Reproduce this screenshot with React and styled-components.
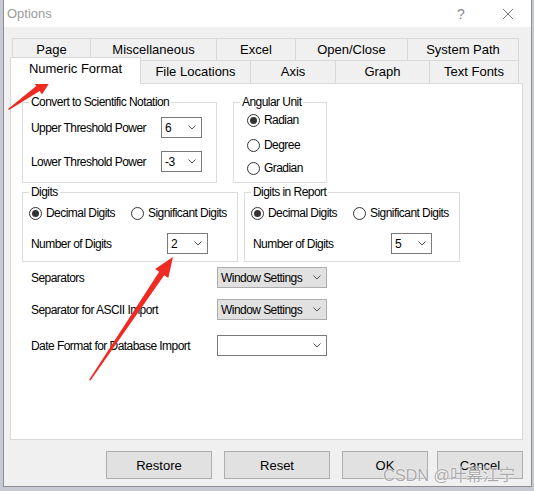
import React from 'react';
import styled, { createGlobalStyle } from 'styled-components';

const Global = createGlobalStyle`
  html, body {
    margin: 0;
    padding: 0;
    background: #c8cad3;
  }
  body {
    font-family: "Liberation Sans", Arial, sans-serif;
    color: #000;
  }
`;

const Screen = styled.div`
  position: relative;
  width: 534px;
  height: 491px;
  overflow: hidden;
`;

const Dialog = styled.div`
  margin-left: 3px;
  width: 529px;
  height: 487px;
  box-sizing: border-box;
  border: 1px solid #8e8e8e;
  border-top: none;
  background: #f0f0f0;
  display: flex;
  flex-direction: column;
`;

const TitleBar = styled.div`
  height: 27px;
  background: #fff;
  display: flex;
  align-items: center;
  padding-left: 3px;
  font-size: 13px;
  color: #9a9a9a;
`;

const TitleText = styled.div`
  flex: 1;
`;

const TitleButton = styled.div`
  width: ${p => p.w}px;
  display: flex;
  justify-content: center;
  align-items: center;
  font-size: 14px;
  color: #8a8a8a;
`;

const Body = styled.div`
  flex: 1;
  padding: 11px 8px 0 6px;
  display: flex;
  flex-direction: column;
`;

const TabRow = styled.div`
  display: flex;
  height: ${p => p.h}px;
  margin: 0 ${p => p.inset}px;
  position: relative;
  z-index: ${p => p.z || 0};
`;

const Tab = styled.div`
  box-sizing: border-box;
  width: ${p => p.w}px;
  height: 100%;
  display: flex;
  align-items: center;
  justify-content: center;
  font-size: 13px;
  background: #f0f0f0;
  border: 1px solid #d9d9d9;
  border-bottom: none;
  border-left: ${p => (p.first ? '1px solid #d9d9d9' : 'none')};
  padding-bottom: 1px;
`;

const ActiveTab = styled.div`
  box-sizing: border-box;
  width: ${p => p.w}px;
  height: 27px;
  margin-top: -3px;
  margin-bottom: -1px;
  background: #fff;
  border: 1px solid #d9d9d9;
  border-bottom: none;
  display: flex;
  align-items: center;
  justify-content: center;
  font-size: 13px;
  padding-bottom: 5px;
`;

const Panel = styled.div`
  box-sizing: border-box;
  height: 357px;
  background: #fff;
  border: 1px solid #d9d9d9;
  padding: 11px 0 0 11px;
  font-size: 12px;
  letter-spacing: -0.55px;
`;

const GroupRow = styled.div`
  display: flex;
  gap: ${p => p.gap}px;
  margin-top: ${p => p.mt || 0}px;
`;

const Group = styled.fieldset`
  box-sizing: border-box;
  width: ${p => p.w}px;
  height: ${p => p.h}px;
  margin: 0;
  padding: 0 6px;
  border: 1px solid #dcdcdc;
  min-width: 0;
`;

const Legend = styled.legend`
  padding: 0 2px;
  line-height: 14px;
  font-size: 12px;
`;

const Line = styled.div`
  display: flex;
  align-items: center;
  height: ${p => p.h || 21}px;
  margin-top: ${p => p.mt || 0}px;
  padding-left: ${p => p.pl || 0}px;
`;

const Label = styled.div`
  width: ${p => p.w}px;
  flex-shrink: 0;
  white-space: nowrap;
`;

const Combo = styled.div`
  box-sizing: border-box;
  width: ${p => p.w}px;
  height: 21px;
  display: flex;
  align-items: center;
  justify-content: space-between;
  padding: 0 5px 0 3px;
  background: ${p => (p.grey ? '#e1e1e1' : '#fff')};
  border: 1px solid ${p => (p.grey ? '#adadad' : '#7a7a7a')};
  font-size: 12px;
`;

const Option = styled.div`
  display: flex;
  align-items: center;
  width: ${p => (p.w ? `${p.w}px` : 'auto')};
  white-space: nowrap;
`;

const Circle = styled.span`
  box-sizing: border-box;
  width: 13px;
  height: 13px;
  border-radius: 50%;
  border: 1px solid #333;
  background: #fff;
  margin-right: ${p => p.gap || 4}px;
  display: flex;
  align-items: center;
  justify-content: center;
  flex-shrink: 0;
  &::after {
    content: '';
    width: 7px;
    height: 7px;
    border-radius: 50%;
    background: ${p => (p.on ? '#333' : 'transparent')};
  }
`;

const Footer = styled.div`
  display: flex;
  justify-content: flex-end;
  margin-top: 11px;
`;

const Button = styled.div`
  box-sizing: border-box;
  width: ${p => p.w}px;
  height: 28px;
  margin-left: ${p => p.ml}px;
  background: #e1e1e1;
  border: 1px solid #adadad;
  display: flex;
  align-items: center;
  justify-content: center;
  font-size: 13px;
`;

const Overlay = styled.svg`
  position: absolute;
  left: 0;
  top: 0;
  pointer-events: none;
`;

const Watermark = styled.div`
  position: absolute;
  left: 383px;
  top: 462px;
  font-family: "Liberation Sans", "Noto Sans CJK SC", sans-serif;
  font-size: 16.5px;
  color: rgba(140, 140, 140, 0.75);
  text-shadow: 0 0 2px #fff, 0 0 1px #fff;
  white-space: nowrap;
  letter-spacing: -0.2px;
`;

function Chevron() {
  return (
    <svg width="8" height="5" viewBox="0 0 8 5">
      <polyline points="0.5,0.5 4,4 7.5,0.5" fill="none" stroke="#555" strokeWidth="1" />
    </svg>
  );
}

function Select({ w, value, grey }) {
  return (
    <Combo w={w} grey={grey}>
      <span>{value}</span>
      <Chevron />
    </Combo>
  );
}

function Radio({ on, children, w }) {
  return (
    <Option w={w}>
      <Circle on={on} />
      {children}
    </Option>
  );
}

const topTabs = [
  ['Page', 79],
  ['Miscellaneous', 126],
  ['Excel', 79],
  ['Open/Close', 112],
  ['System Path', 111],
];

const bottomTabs = [
  ['File Locations', 110],
  ['Axis', 85],
  ['Graph', 94],
  ['Text Fonts', 89],
];

export default function App() {
  return (
    <Screen>
      <Global />
      <Dialog>
        <TitleBar>
          <TitleText>Options</TitleText>
          <TitleButton w={48}>?</TitleButton>
          <TitleButton w={46}>
            <svg width="12" height="12" viewBox="0 0 12 12">
              <path d="M1 1 L11 11 M11 1 L1 11" stroke="#777" strokeWidth="1" />
            </svg>
          </TitleButton>
        </TitleBar>
        <Body>
          <TabRow h={22} inset={2}>
            {topTabs.map(([t, w], i) => (
              <Tab key={t} w={w} first={i === 0}>{t}</Tab>
            ))}
          </TabRow>
          <TabRow h={23} inset={0} z={2}>
            <ActiveTab w={131}>Numeric Format</ActiveTab>
            {bottomTabs.map(([t, w]) => (
              <Tab key={t} w={w}>{t}</Tab>
            ))}
          </TabRow>
          <Panel>
            <GroupRow gap={16}>
              <Group w={195} h={88}>
                <Legend>Convert to Scientific Notation</Legend>
                <Line mt={8} pl={2}>
                  <Label w={130}>Upper Threshold Power</Label>
                  <Select w={41} value="6" />
                </Line>
                <Line mt={13} pl={2}>
                  <Label w={130}>Lower Threshold Power</Label>
                  <Select w={41} value="-3" />
                </Line>
              </Group>
              <Group w={94} h={88}>
                <Legend>Angular Unit</Legend>
                <Line h={16} mt={3} pl={7}>
                  <Radio on>Radian</Radio>
                </Line>
                <Line h={16} mt={9} pl={7}>
                  <Radio>Degree</Radio>
                </Line>
                <Line h={16} mt={7} pl={7}>
                  <Radio>Gradian</Radio>
                </Line>
              </Group>
            </GroupRow>
            <GroupRow gap={6} mt={2}>
              <Group w={216} h={77}>
                <Legend>Digits</Legend>
                <Line h={16} mt={6}>
                  <Radio on w={102}>Decimal Digits</Radio>
                  <Radio>Significant Digits</Radio>
                </Line>
                <Line mt={12} pl={2}>
                  <Label w={136}>Number of Digits</Label>
                  <Select w={41} value="2" />
                </Line>
              </Group>
              <Group w={216} h={77}>
                <Legend>Digits in Report</Legend>
                <Line h={16} mt={6}>
                  <Radio on w={102}>Decimal Digits</Radio>
                  <Radio>Significant Digits</Radio>
                </Line>
                <Line mt={12} pl={2}>
                  <Label w={138}>Number of Digits</Label>
                  <Select w={41} value="5" />
                </Line>
              </Group>
            </GroupRow>
            <Line mt={5} pl={9}>
              <Label w={186}>Separators</Label>
              <Select w={110} value="Window Settings" grey />
            </Line>
            <Line mt={11} pl={9}>
              <Label w={186}>Separator for ASCII Import</Label>
              <Select w={110} value="Window Settings" grey />
            </Line>
            <Line mt={15} pl={9}>
              <Label w={186}>Date Format for Database Import</Label>
              <Select w={110} value="" />
            </Line>
          </Panel>
          <Footer>
            <Button w={106} ml={0}>Restore</Button>
            <Button w={106} ml={12}>Reset</Button>
            <Button w={86} ml={12}>OK</Button>
            <Button w={86} ml={9}>Cancel</Button>
          </Footer>
        </Body>
      </Dialog>
      <Overlay width="534" height="491" viewBox="0 0 534 491">
        <polygon
          points="8,109 36.3,86.1 34.1,82.8 52,79 41.9,94.4 39.7,91.1 9,110"
          fill="#ef2a22"
        />
        <polygon
          points="89,380 159.2,271.8 155.1,269 173,257 168.3,278 164.2,275.2 90.5,380.5"
          fill="#ef2a22"
        />
      </Overlay>
      <Watermark>CSDN @叶幕江宁</Watermark>
    </Screen>
  );
}
